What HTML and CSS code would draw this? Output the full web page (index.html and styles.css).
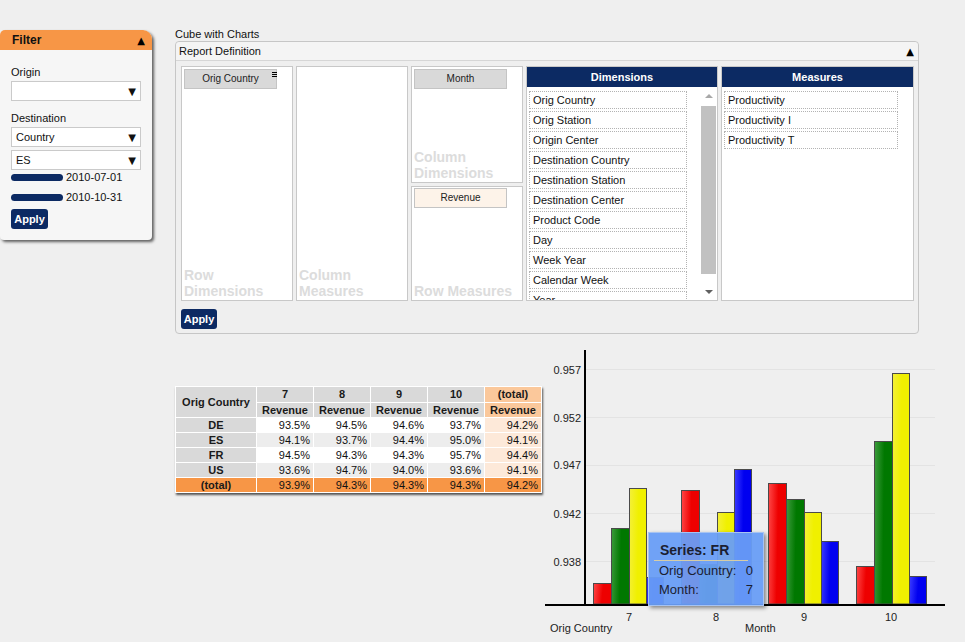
FILE: index.html
```html
<!DOCTYPE html>
<html>
<head>
 <meta charset="utf-8">
 <link rel="stylesheet" href="styles.css">
</head>
<body>
<div class="page">
  <div class="filter">
    <div class="filter-head"><span>Filter</span><span class="tri">&#9650;</span></div>
    <div class="filter-body">
      <div class="lbl">Origin</div>
      <div class="select"><span></span><span class="caret">&#9660;</span></div>
      <div class="lbl dest">Destination</div>
      <div class="select"><span>Country</span><span class="caret">&#9660;</span></div>
      <div class="select next"><span>ES</span><span class="caret">&#9660;</span></div>
      <div class="date"><span class="slider"></span>2010-07-01</div>
      <div class="date next"><span class="slider"></span>2010-10-31</div>
      <button class="apply">Apply</button>
    </div>
  </div>

  <div class="main">
    <div class="title">Cube with Charts</div>
    <div class="report">
      <div class="report-head"><span>Report Definition</span><span class="tri">&#9650;</span></div>
      <div class="report-body">
        <div class="zones">
          <div class="zone">
            <div class="chip">Orig Country
              <svg class="menu" width="5" height="6" viewBox="0 0 5 6"><rect x="0" y="0" width="5" height="1"/><rect x="0" y="2" width="5" height="1"/><rect x="0" y="4" width="5" height="1"/></svg>
            </div>
            <div class="hint">Row<br>Dimensions</div>
          </div>
          <div class="zone">
            <div class="hint">Column<br>Measures</div>
          </div>
          <div class="stack">
            <div class="zone upper">
              <div class="chip">Month</div>
              <div class="hint">Column<br>Dimensions</div>
            </div>
            <div class="zone lower">
              <div class="chip measure">Revenue</div>
              <div class="hint">Row Measures</div>
            </div>
          </div>
          <div class="fields dims">
            <div class="fields-head">Dimensions</div>
            <div class="fields-body">
              <div class="field-list">
                <div class="item">Orig Country</div>
                <div class="item">Orig Station</div>
                <div class="item">Origin Center</div>
                <div class="item">Destination Country</div>
                <div class="item">Destination Station</div>
                <div class="item">Destination Center</div>
                <div class="item">Product Code</div>
                <div class="item">Day</div>
                <div class="item">Week Year</div>
                <div class="item">Calendar Week</div>
                <div class="item">Year</div>
              </div>
              <div class="scrollbar">
                <div class="sb-btn"><span class="up"></span></div>
                <div class="thumb"></div>
                <div class="sb-space"></div>
                <div class="sb-btn"><span class="down"></span></div>
              </div>
            </div>
          </div>
          <div class="fields measures">
            <div class="fields-head">Measures</div>
            <div class="fields-body">
              <div class="field-list">
                <div class="item">Productivity</div>
                <div class="item">Productivity I</div>
                <div class="item">Productivity T</div>
              </div>
            </div>
          </div>
        </div>
        <button class="apply">Apply</button>
      </div>
    </div>

    <div class="results">
      <table class="pivot">
        <tr class="h1">
          <th class="rowhead" rowspan="2">Orig Country</th>
          <th>7</th><th>8</th><th>9</th><th>10</th><th class="tot-h">(total)</th>
        </tr>
        <tr class="h2">
          <th>Revenue</th><th>Revenue</th><th>Revenue</th><th>Revenue</th><th class="tot-h">Revenue</th>
        </tr>
        <tr>
          <th>DE</th><td>93.5%</td><td>94.5%</td><td>94.6%</td><td>93.7%</td><td class="tot">94.2%</td>
        </tr>
        <tr class="alt">
          <th>ES</th><td>94.1%</td><td>93.7%</td><td>94.4%</td><td>95.0%</td><td class="tot">94.1%</td>
        </tr>
        <tr>
          <th>FR</th><td>94.5%</td><td>94.3%</td><td>94.3%</td><td>95.7%</td><td class="tot">94.4%</td>
        </tr>
        <tr class="alt">
          <th>US</th><td>93.6%</td><td>94.7%</td><td>94.0%</td><td>93.6%</td><td class="tot">94.1%</td>
        </tr>
        <tr class="total-row">
          <th>(total)</th><td>93.9%</td><td>94.3%</td><td>94.3%</td><td>94.3%</td><td>94.2%</td>
        </tr>
      </table>

      <div class="chart">
        <svg width="421" height="292" viewBox="0 0 421 292">
          <defs>
            <linearGradient id="gr" x1="0" y1="0" x2="1" y2="0.12">
              <stop offset="0" stop-color="#ff4848"/><stop offset="0.55" stop-color="#ee0000"/>
            </linearGradient>
            <linearGradient id="gg" x1="0" y1="0" x2="1" y2="0.12">
              <stop offset="0" stop-color="#3d9b3d"/><stop offset="0.55" stop-color="#007800"/>
            </linearGradient>
            <linearGradient id="gy" x1="0" y1="0" x2="1" y2="0.12">
              <stop offset="0" stop-color="#f4f03a"/><stop offset="0.55" stop-color="#f0f000"/>
            </linearGradient>
            <linearGradient id="gb" x1="0" y1="0" x2="1" y2="0.12">
              <stop offset="0" stop-color="#3c3cff"/><stop offset="0.55" stop-color="#0000f0"/>
            </linearGradient>
          </defs>
          <g class="grid">
            <line x1="41" y1="19.5" x2="390" y2="19.5"/>
            <line x1="41" y1="67.5" x2="390" y2="67.5"/>
            <line x1="41" y1="115.5" x2="390" y2="115.5"/>
            <line x1="41" y1="163.5" x2="390" y2="163.5"/>
            <line x1="41" y1="211.5" x2="390" y2="211.5"/>
          </g>
          <g class="ylab">
            <text x="36" y="24">0.957</text>
            <text x="36" y="72">0.952</text>
            <text x="36" y="119">0.947</text>
            <text x="36" y="168">0.942</text>
            <text x="36" y="216">0.938</text>
          </g>
          <g class="bars">
            <rect x="48.5" y="233.5" width="18" height="20.5" fill="url(#gr)"/>
            <rect x="66.5" y="178.5" width="18" height="75.5" fill="url(#gg)"/>
            <rect x="84.5" y="138.5" width="17" height="115.5" fill="url(#gy)"/>
            <rect x="101.5" y="227.5" width="17" height="26.5" fill="url(#gb)"/>

            <rect x="136.5" y="140.5" width="18" height="113.5" fill="url(#gr)"/>
            <rect x="154.5" y="214.5" width="18" height="39.5" fill="url(#gg)"/>
            <rect x="172.5" y="162.5" width="17" height="91.5" fill="url(#gy)"/>
            <rect x="189.5" y="119.5" width="17" height="134.5" fill="url(#gb)"/>

            <rect x="223.5" y="133.5" width="18" height="120.5" fill="url(#gr)"/>
            <rect x="241.5" y="149.5" width="18" height="104.5" fill="url(#gg)"/>
            <rect x="259.5" y="162.5" width="17" height="91.5" fill="url(#gy)"/>
            <rect x="276.5" y="191.5" width="17" height="62.5" fill="url(#gb)"/>

            <rect x="311.5" y="216.5" width="18" height="37.5" fill="url(#gr)"/>
            <rect x="329.5" y="91.5" width="18" height="162.5" fill="url(#gg)"/>
            <rect x="347.5" y="23.5" width="17" height="230.5" fill="url(#gy)"/>
            <rect x="364.5" y="226.5" width="17" height="27.5" fill="url(#gb)"/>
          </g>
          <rect x="39" y="0" width="2" height="256" fill="#000"/>
          <rect x="0" y="254" width="400" height="2" fill="#000"/>
          <g class="xlab">
            <text x="84" y="271">7</text>
            <text x="171" y="271">8</text>
            <text x="259" y="271">9</text>
            <text x="346" y="271">10</text>
          </g>
          <text class="axis-title" x="5" y="282">Orig Country</text>
          <text class="axis-title" x="200" y="282">Month</text>
        </svg>
        <div class="tooltip">
          <div class="tt-title">Series: FR</div>
          <div class="tt-row"><span>Orig Country:</span><span>0</span></div>
          <div class="tt-row"><span>Month:</span><span>7</span></div>
        </div>
      </div>
    </div>
  </div>
</div>
</body>
</html>
```

FILE: styles.css
```css
* {
  box-sizing: border-box;
}

body {
  margin: 0;
  background-color: #efefef;
  font-family: "Liberation Sans", Arial, sans-serif;
  font-size: 11px;
  color: #111;
  overflow: hidden;
}

.page {
  display: flex;
  align-items: flex-start;
  padding-top: 28px;
}

.tri {
  font-family: "DejaVu Sans", sans-serif;
  font-size: 10px;
  color: #000;
}

/* filter panel */
.filter {
  width: 152px;
  margin-top: 2px;
  margin-right: 23px;
  background-color: #f6f6f6;
  border-radius: 5px 9px 4px 4px;
  box-shadow: 2px 2px 3px rgba(0, 0, 0, 0.6);
  overflow: hidden;
  flex: none;
}

.filter-head {
  height: 20px;
  background-color: #f79646;
  display: flex;
  justify-content: space-between;
  align-items: center;
  padding: 0 7px 0 12px;
  font-weight: bold;
  font-size: 12px;
}

.filter-body {
  padding: 15px 11px 11px 11px;
}

.lbl {
  height: 14px;
  line-height: 14px;
  margin-bottom: 2px;
}

.lbl.dest {
  margin-top: 10px;
}

.select {
  height: 20px;
  background-color: #fff;
  border: 1px solid #cacaca;
  display: flex;
  justify-content: space-between;
  align-items: center;
  padding: 0 4px 0 4px;
}

.select.next {
  margin-top: 3px;
}

.caret {
  font-family: "DejaVu Sans", sans-serif;
  font-size: 10px;
}

.date {
  height: 14px;
  display: flex;
  align-items: center;
}

.date.next {
  margin-top: 6px;
}

.slider {
  width: 52px;
  height: 7px;
  border-radius: 4px;
  background-color: #0c2a63;
  margin-right: 3px;
}

.apply {
  display: block;
  width: 37px;
  height: 20px;
  margin-top: 5px;
  padding: 0;
  border: none;
  border-radius: 3px;
  background-color: #0c2a63;
  color: #fff;
  font-family: "Liberation Sans", Arial, sans-serif;
  font-weight: bold;
  font-size: 11px;
}

/* report definition */
.main {
  flex: none;
  display: flex;
  flex-direction: column;
}

.title {
  height: 13px;
  line-height: 13px;
}

.report {
  width: 744px;
  border: 1px solid #c6c6c6;
  border-radius: 4px;
}

.report-head {
  height: 19px;
  border-bottom: 1px solid #d6d6d6;
  background-color: #f4f4f4;
  display: flex;
  justify-content: space-between;
  align-items: center;
  padding: 0 4px 0 3px;
  border-radius: 4px 4px 0 0;
}

.report-body {
  padding: 5px 4px 4px 5px;
}

.report-body .apply {
  width: 36px;
  margin-top: 8px;
}

.zones {
  display: flex;
  gap: 3px;
  height: 235px;
}

.zone {
  width: 112px;
  background-color: #fff;
  border: 1px solid #c8c8c8;
  display: flex;
  flex-direction: column;
}

.stack {
  display: flex;
  flex-direction: column;
  gap: 3px;
}

.zone.upper {
  height: 117px;
}

.zone.lower {
  height: 115px;
}

.chip {
  position: relative;
  width: 93px;
  height: 20px;
  margin: 2px 0 0 2px;
  background-color: #d9d9d9;
  border: 1px solid #c4c4c4;
  text-align: center;
  line-height: 18px;
  font-size: 10px;
  color: #222;
}

.chip.measure {
  margin-top: 1px;
  background-color: #fdf3e9;
}

.menu {
  position: absolute;
  right: -1px;
  top: 2px;
  fill: #000;
}

.hint {
  margin-top: auto;
  padding: 0 0 1px 2px;
  font-weight: bold;
  font-size: 14px;
  line-height: 16px;
  color: #dcdcdc;
}

.fields {
  background-color: #fff;
  border: 1px solid #c8c8c8;
  display: flex;
  flex-direction: column;
}

.fields.dims {
  width: 192px;
}

.fields.measures {
  width: 193px;
}

.fields-head {
  height: 20px;
  flex: none;
  background-color: #0c2a63;
  color: #fff;
  font-weight: bold;
  text-align: center;
  line-height: 20px;
}

.fields-body {
  flex: 1;
  display: flex;
  overflow: hidden;
}

.field-list {
  flex: 1;
  padding: 4px 0 0 2px;
  overflow: hidden;
}

.item {
  width: 158px;
  height: 18px;
  margin-bottom: 2px;
  border: 1px dotted #b3b3b3;
  padding-left: 3px;
  line-height: 16px;
  white-space: nowrap;
}

.measures .item {
  width: 174px;
}

.scrollbar {
  width: 17px;
  flex: none;
  display: flex;
  flex-direction: column;
  background-color: #fff;
}

.sb-btn {
  height: 17px;
  display: flex;
  align-items: center;
  justify-content: center;
}

.up {
  border-left: 4px solid transparent;
  border-right: 4px solid transparent;
  border-bottom: 4px solid #a8a8a8;
}

.down {
  border-left: 4px solid transparent;
  border-right: 4px solid transparent;
  border-top: 4px solid #606060;
}

.thumb {
  height: 168px;
  margin: 2px 1px 0 1px;
  background-color: #c1c1c1;
}

.sb-space {
  flex: 1;
}

/* results */
.results {
  display: flex;
  align-items: flex-start;
  margin-top: 16px;
}

.pivot {
  margin-top: 36px;
  border-collapse: collapse;
  font-size: 11px;
  box-shadow: 1px 2px 2px rgba(0, 0, 0, 0.65);
}

.pivot th,
.pivot td {
  border: 1px solid #fff;
  padding: 0 3px;
  height: 15px;
  line-height: 13px;
}

.pivot th {
  background-color: #d9d9d9;
  font-weight: bold;
  text-align: center;
  color: #1a1a1a;
}

.pivot .h1 th {
  height: 16px;
}

.pivot .rowhead {
  width: 81px;
}

.pivot td {
  width: 57px;
  text-align: right;
  background-color: #fff;
}

.pivot tr.alt td {
  background-color: #ededed;
}

.pivot th.tot-h {
  background-color: #fbc89b;
}

.pivot td.tot,
.pivot tr.alt td.tot {
  background-color: #fde9d9;
  border-bottom: 1px dotted #c0733a;
}

.pivot tr.total-row th,
.pivot tr.total-row td {
  background-color: #f79646;
}

.chart {
  position: relative;
  margin-left: 3px;
  width: 421px;
  height: 292px;
}

.chart svg {
  display: block;
}

.grid line {
  stroke: #e3e3e3;
  stroke-width: 1;
}

.ylab text {
  font-family: "Liberation Sans", Arial, sans-serif;
  font-size: 11px;
  fill: #222;
  text-anchor: end;
}

.xlab text {
  font-family: "Liberation Sans", Arial, sans-serif;
  font-size: 11px;
  fill: #222;
  text-anchor: middle;
}

.axis-title {
  font-family: "Liberation Sans", Arial, sans-serif;
  font-size: 11px;
  fill: #222;
}

.bars rect {
  stroke: #4a4a4a;
  stroke-width: 1;
}

.tooltip {
  position: absolute;
  left: 103px;
  top: 182px;
  width: 116px;
  height: 74px;
  background-color: rgba(104, 157, 246, 0.95);
  border: 1px solid #a6c3f2;
  box-shadow: 2px 2px 4px rgba(0, 0, 0, 0.45);
  padding: 0 10px 0 0;
  color: #1b2030;
}

.tt-title {
  margin: 0 5px;
  padding: 9px 0 1px 6px;
  line-height: 17px;
  font-weight: bold;
  font-size: 14px;
  border-bottom: 1px solid #d6cda6;
}

.tt-row {
  display: flex;
  justify-content: space-between;
  padding-left: 10px;
  line-height: 20px;
  font-size: 13px;
}

.tt-row + .tt-row {
  margin-top: -1px;
}
```
